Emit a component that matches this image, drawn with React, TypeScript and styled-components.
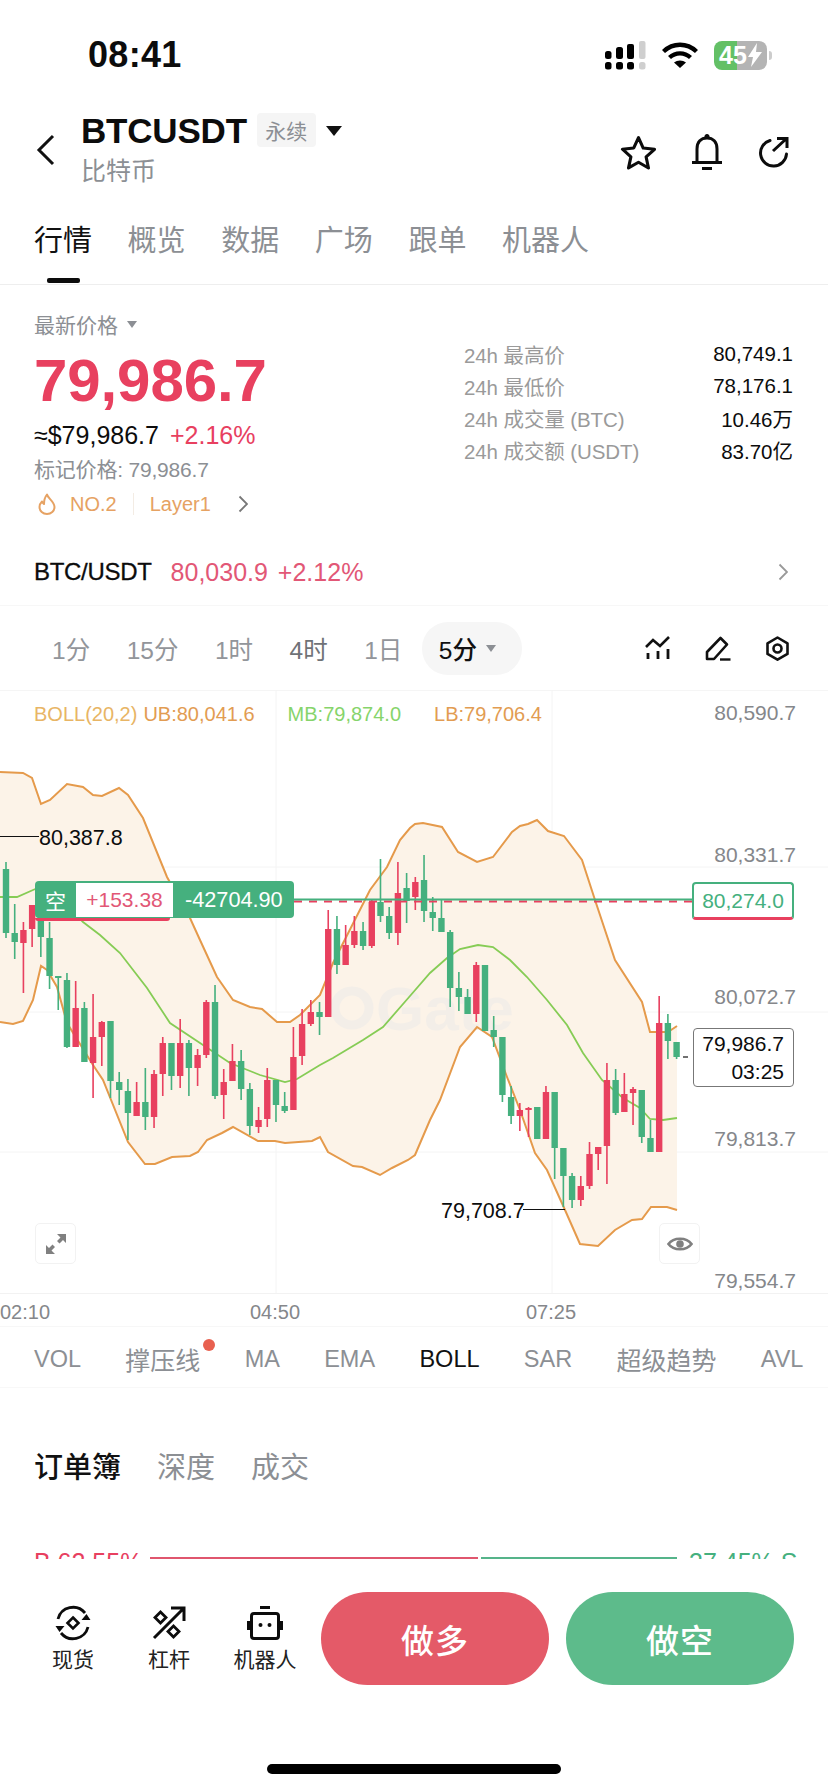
import styled, { createGlobalStyle } from 'styled-components';

const RED = '#e8405f';
const GREEN = '#45b07e';
const ORANGE = '#e6a263';

const GlobalStyle = createGlobalStyle`
  html, body {
    margin: 0;
    padding: 0;
    background: #fff;
  }
  body {
    font-family: "Liberation Sans", "Noto Sans CJK SC", sans-serif;
    color: #0c0c0c;
  }
  * {
    box-sizing: border-box;
  }
`;

// [color, high, bodyTop, bodyBottom, low], read off the reference in page pixels
type Candle = ['r' | 'g', number, number, number, number];

const CANDLES: Candle[] = [
  ['g', 862, 869, 933, 938], ['g', 904, 933, 942, 959], ['r', 922, 930, 943, 993], ['r', 905, 905, 929, 947],
  ['g', 905, 917, 937, 957], ['g', 922, 938, 976, 989], ['g', 976, 976, 978, 1010], ['g', 973, 980, 1047, 1048],
  ['r', 981, 1008, 1047, 1047], ['g', 1002, 1008, 1062, 1062], ['r', 994, 1037, 1063, 1098], ['r', 1021, 1022, 1037, 1066],
  ['g', 1021, 1021, 1081, 1098], ['g', 1072, 1082, 1090, 1105], ['g', 1079, 1091, 1113, 1140], ['r', 1082, 1102, 1116, 1116],
  ['g', 1068, 1102, 1117, 1130], ['r', 1070, 1074, 1117, 1128], ['r', 1037, 1043, 1074, 1096], ['g', 1043, 1043, 1076, 1090],
  ['r', 1019, 1043, 1076, 1088], ['g', 1040, 1043, 1068, 1096], ['r', 1049, 1055, 1068, 1086], ['r', 1000, 1002, 1055, 1058],
  ['g', 985, 1002, 1096, 1099], ['r', 1069, 1082, 1095, 1119], ['r', 1044, 1061, 1081, 1081], ['g', 1050, 1061, 1089, 1100],
  ['g', 1083, 1089, 1126, 1135], ['r', 1107, 1120, 1127, 1133], ['r', 1068, 1080, 1119, 1127], ['g', 1080, 1080, 1105, 1122],
  ['g', 1092, 1106, 1111, 1113], ['r', 1027, 1057, 1110, 1110], ['r', 1009, 1024, 1056, 1065], ['r', 1000, 1012, 1024, 1026],
  ['g', 1002, 1012, 1017, 1035], ['r', 910, 929, 1017, 1017], ['g', 916, 929, 965, 974], ['r', 925, 945, 965, 965],
  ['r', 916, 931, 945, 948], ['g', 922, 931, 946, 950], ['r', 900, 902, 946, 948], ['g', 859, 902, 916, 922],
  ['g', 907, 916, 933, 939], ['r', 862, 893, 933, 945], ['g', 873, 888, 901, 923], ['r', 877, 882, 897, 910],
  ['g', 855, 880, 911, 922], ['g', 897, 912, 918, 931], ['g', 900, 918, 932, 932], ['g', 930, 932, 988, 1007],
  ['g', 972, 988, 997, 1011], ['g', 989, 997, 1014, 1014], ['r', 962, 965, 1014, 1022], ['g', 965, 965, 1031, 1031],
  ['g', 1016, 1030, 1037, 1047], ['g', 1037, 1037, 1095, 1102], ['g', 1086, 1097, 1116, 1124], ['r', 1103, 1110, 1116, 1131],
  ['r', 1107, 1108, 1110, 1137], ['g', 1107, 1107, 1139, 1139], ['r', 1086, 1092, 1139, 1139], ['g', 1092, 1092, 1148, 1179],
  ['g', 1148, 1148, 1176, 1207], ['g', 1173, 1176, 1200, 1208], ['r', 1176, 1186, 1200, 1206], ['r', 1142, 1154, 1186, 1189],
  ['r', 1147, 1147, 1154, 1170], ['r', 1063, 1080, 1146, 1184], ['g', 1069, 1080, 1113, 1115], ['r', 1073, 1094, 1112, 1112],
  ['r', 1087, 1089, 1093, 1125], ['g', 1090, 1090, 1137, 1143], ['g', 1120, 1138, 1152, 1152], ['r', 996, 1023, 1152, 1152],
  ['g', 1014, 1023, 1041, 1059], ['g', 1042, 1042, 1057, 1059],
];

const UPPER: [number, number][] = [
  [0, 772], [23, 773], [32, 778], [41, 804], [50, 800], [67, 784], [83, 787], [93, 795], [102, 796], [119, 788],
  [128, 795], [143, 818], [167, 877], [190, 918], [200, 940], [217, 977], [233, 1000], [250, 1007], [262, 1009],
  [277, 1022], [290, 1022], [300, 1015], [320, 995], [333, 963], [370, 890], [387, 867], [400, 840], [410, 828],
  [415, 824], [423, 823], [442, 827], [458, 852], [477, 862], [493, 857], [512, 832], [520, 826], [528, 824],
  [537, 820], [548, 831], [564, 836], [582, 860], [595, 900], [615, 960], [642, 1002], [650, 1032], [660, 1032],
  [668, 1032], [677, 1026],
];

const LOWER: [number, number][] = [
  [0, 1022], [13, 1024], [23, 1021], [33, 1000], [41, 966], [47, 970], [57, 987], [67, 1023], [93, 1065], [103, 1080],
  [128, 1142], [145, 1164], [155, 1164], [172, 1157], [190, 1156], [198, 1152], [207, 1140], [222, 1133], [233, 1127],
  [258, 1141], [275, 1141], [285, 1143], [312, 1141], [320, 1137], [328, 1152], [353, 1166], [362, 1167], [380, 1175],
  [392, 1168], [408, 1160], [415, 1155], [430, 1120], [440, 1100], [460, 1047], [477, 1027], [492, 1037], [507, 1077],
  [520, 1110], [535, 1153], [547, 1170], [565, 1210], [580, 1244], [598, 1246], [615, 1230], [632, 1220], [642, 1219],
  [651, 1207], [667, 1207], [677, 1210],
];

const MIDDLE: [number, number][] = [
  [0, 897], [17, 897], [33, 890], [45, 885], [65, 903], [83, 922], [100, 935], [120, 953], [147, 988], [170, 1023],
  [200, 1043], [230, 1063], [260, 1075], [285, 1082], [297, 1079], [320, 1065], [333, 1058], [363, 1040], [383, 1027],
  [410, 996], [430, 973], [447, 958], [460, 949], [478, 945], [493, 947], [510, 960], [527, 977], [547, 1000],
  [567, 1025], [583, 1053], [602, 1080], [623, 1098], [640, 1108], [650, 1119], [663, 1120], [677, 1118],
];

const STATS = [
  { label: '24h 最高价', value: '80,749.1' },
  { label: '24h 最低价', value: '78,176.1' },
  { label: '24h 成交量 (BTC)', value: '10.46万' },
  { label: '24h 成交额 (USDT)', value: '83.70亿' },
];

const toPoints = (pts: [number, number][]) => pts.map(([x, y]) => `${x},${y}`).join(' ');
const candleX = (i: number) => 6 + 8.709 * i;

function ChartDrawing() {
  const band = toPoints([...UPPER, ...[...LOWER].reverse()]);
  return (
    <ChartSvg viewBox="0 690 828 603" width="828" height="603">
      <g stroke="#f4f4f4" strokeWidth="1">
        <line x1="0" y1="867" x2="828" y2="867" />
        <line x1="0" y1="1012" x2="828" y2="1012" />
        <line x1="0" y1="1152" x2="828" y2="1152" />
        <line x1="276" y1="690" x2="276" y2="1293" />
        <line x1="552" y1="690" x2="552" y2="1293" />
      </g>
      <polygon points={band} fill="#fcf3e8" />
      <circle cx="352" cy="1008" r="17" fill="none" stroke="#f3eee8" strokeWidth="9" />
      <text x="376" y="1030" fontSize="62" fontWeight="700" fill="#f3eee8" fontFamily="Liberation Sans">
        Gate
      </text>
      <polyline points={toPoints(UPPER)} fill="none" stroke="#e59a4b" strokeWidth="2" />
      <polyline points={toPoints(LOWER)} fill="none" stroke="#e59a4b" strokeWidth="2" />
      <polyline points={toPoints(MIDDLE)} fill="none" stroke="#86cc55" strokeWidth="1.8" />
      {CANDLES.map(([c, high, top, bottom, low], i) => {
        const x = candleX(i);
        const fill = c === 'r' ? RED : GREEN;
        return (
          <g key={i} fill={fill}>
            <rect x={x - 0.8} y={high} width="1.6" height={low - high} />
            <rect x={x - 3.2} y={top} width="6.4" height={Math.max(bottom - top, 2)} />
          </g>
        );
      })}
      <line x1="0" y1="836.5" x2="39" y2="836.5" stroke="#111" strokeWidth="1.2" />
      <line x1="523" y1="1209.5" x2="565" y2="1209.5" stroke="#111" strokeWidth="1.2" />
      <line x1="683" y1="1057" x2="688" y2="1057" stroke="#111" strokeWidth="1.2" />
      <line x1="294" y1="901.5" x2="692" y2="901.5" stroke={RED} strokeWidth="2" strokeDasharray="8 7" />
      <line x1="294" y1="899.5" x2="692" y2="899.5" stroke={GREEN} strokeWidth="2" />
    </ChartSvg>
  );
}

function SignalIcon() {
  return (
    <svg width="41" height="29" viewBox="0 0 41 29">
      <rect x="0" y="10" width="6.5" height="8" rx="2.5" />
      <rect x="11" y="6" width="7" height="12" rx="2.5" />
      <rect x="22" y="3" width="7" height="15" rx="2" />
      <rect x="34" y="0" width="6.5" height="18" rx="2" fill="#cfcfcf" />
      <rect x="0" y="21" width="6.5" height="7.5" rx="2.5" />
      <rect x="11" y="21" width="7" height="7.5" rx="2.5" />
      <rect x="22" y="21" width="7" height="7.5" rx="2.5" />
      <rect x="34" y="21" width="6.5" height="7.5" rx="2.5" fill="#cfcfcf" />
    </svg>
  );
}

function WifiIcon() {
  return (
    <svg width="36" height="26" viewBox="0 0 36 26">
      <path d="M1.5 9.5C11 .5 25 .5 34.5 9.5" fill="none" stroke="#000" strokeWidth="4.4" />
      <path d="M7.5 15.5C13.5 10 22.5 10 28.5 15.5" fill="none" stroke="#000" strokeWidth="4.4" />
      <path d="M12 20.6c3.4-2.8 8.6-2.8 12 0L18 26z" />
    </svg>
  );
}

function BackIcon() {
  return (
    <svg width="20" height="32" viewBox="0 0 20 32">
      <path d="M17 2 3 16l14 14" fill="none" stroke="#111" strokeWidth="3" />
    </svg>
  );
}

function StarIcon() {
  return (
    <svg width="37" height="35" viewBox="0 0 36 34">
      <path
        d="M18 2.5l4.6 10.2 11 1.2-8.2 7.4 2.3 10.8L18 26.5 8.3 32l2.3-10.8-8.2-7.4 11-1.2z"
        fill="none"
        stroke="#0c0c0c"
        strokeWidth="3"
        strokeLinejoin="round"
      />
    </svg>
  );
}

function BellIcon() {
  return (
    <svg width="30" height="36" viewBox="0 0 30 36">
      <path d="M15 0a2.5 2.5 0 0 1 2.5 3h-5A2.5 2.5 0 0 1 15 0z" fill="#0c0c0c" />
      <path d="M5 28V15C5 8 9 4 15 4s10 4 10 11v13" fill="none" stroke="#0c0c0c" strokeWidth="3" />
      <path d="M0 28.5h30M10 34.5h10" fill="none" stroke="#0c0c0c" strokeWidth="3" />
    </svg>
  );
}

function ShareIcon() {
  return (
    <svg width="32" height="31" viewBox="0 0 32 31">
      <path d="M13 3.5A13 13 0 1 0 29.5 17" fill="none" stroke="#0c0c0c" strokeWidth="3" strokeLinecap="round" />
      <path d="M16 14 29 2M20 1.5h10V11" fill="none" stroke="#0c0c0c" strokeWidth="3" />
    </svg>
  );
}

function FlameIcon() {
  return (
    <svg width="18" height="22" viewBox="0 0 18 22">
      <path
        d="M9 1.5c.5 3.5 7.5 7 7.5 12.5A7.5 7 0 0 1 1.5 14c0-2.5 1-4 2.5-5.5.5 1.5 1 2 2 2.5C6 7.5 7 4 9 1.5z"
        fill="none"
        stroke={ORANGE}
        strokeWidth="2"
        strokeLinejoin="round"
      />
    </svg>
  );
}

function Chevron({ color = '#777' }: { color?: string }) {
  return (
    <svg width="10" height="18" viewBox="0 0 10 18">
      <path d="M1.5 1.5 9 9l-7.5 7.5" fill="none" stroke={color} strokeWidth="1.8" />
    </svg>
  );
}

function IndicatorIcon() {
  return (
    <svg width="26" height="24" viewBox="0 0 26 24">
      <path d="M1 11l7-7 7 6 9-9" fill="none" stroke="#111" strokeWidth="2.6" />
      <path d="M3 17v6M13 15v8M23 13v10" fill="none" stroke="#111" strokeWidth="2.8" />
    </svg>
  );
}

function PenIcon() {
  return (
    <svg width="26" height="25" viewBox="0 0 26 25">
      <path d="M2 23v-7L15.5 2 22 8.5 9 23z" fill="none" stroke="#111" strokeWidth="2.6" strokeLinejoin="round" />
      <path d="M15 23.5h10.5" stroke="#111" strokeWidth="2.4" />
    </svg>
  );
}

function SettingsIcon() {
  return (
    <svg width="25" height="25" viewBox="0 0 25 25">
      <path
        d="M12.5 1.5l10 5.8v10.6l-10 5.8-10-5.800V7.300z"
        fill="none"
        stroke="#111"
        strokeWidth="2.6"
        strokeLinejoin="round"
      />
      <circle cx="12.5" cy="12.5" r="4" fill="none" stroke="#111" strokeWidth="2.6" />
    </svg>
  );
}

function ExpandIcon() {
  return (
    <svg width="20" height="20" viewBox="0 0 20 20" fill="#808080">
      <path d="M11 0h9v9l-3-3-3.5 3.5-2.5-2.5L14.500 3.500zM0 20v-9l3 3 3.500-3.500L9 13l-3.500 3.500L9 20z" />
    </svg>
  );
}

function EyeIcon() {
  return (
    <svg width="26" height="18" viewBox="0 0 26 18">
      <path d="M1.5 9C6.5 2 19.5 2 24.5 9 19.5 16 6.5 16 1.5 9z" fill="none" stroke="#808080" strokeWidth="2.6" />
      <circle cx="13" cy="9" r="3.8" fill="#808080" />
    </svg>
  );
}

function SpotIcon() {
  return (
    <svg width="36" height="36" viewBox="0 0 36 36">
      <path d="M3 14A15.5 15.5 0 0 1 30 8" fill="none" stroke="#0c0c0c" strokeWidth="2.8" />
      <path d="M33 22A15.5 15.5 0 0 1 6 28" fill="none" stroke="#0c0c0c" strokeWidth="2.8" />
      <path d="M35.5 15h-9l5-6zM.5 21h9l-5 6z" fill="#0c0c0c" />
      <path d="M18 12.5l5.5 5.5-5.5 5.5-5.5-5.5z" fill="none" stroke="#0c0c0c" strokeWidth="2.6" />
    </svg>
  );
}

function LeverageIcon() {
  return (
    <svg width="34" height="34" viewBox="0 0 34 34">
      <path d="M2 32 31 3M19 2h13v13" fill="none" stroke="#0c0c0c" strokeWidth="3" />
      <path d="M8.5 6l5.5 5.5-5.5 5.5L3 11.5z" fill="none" stroke="#0c0c0c" strokeWidth="2.8" />
      <path d="M21.5 20l5.5 5.5-5.5 5.5-5.500-5.500z" fill="none" stroke="#0c0c0c" strokeWidth="2.8" />
    </svg>
  );
}

function RobotIcon() {
  return (
    <svg width="36" height="34" viewBox="0 0 36 34">
      <path d="M13 1.5h10" stroke="#0c0c0c" strokeWidth="3" />
      <rect x="4.5" y="7.5" width="27" height="25" rx="2.5" fill="none" stroke="#0c0c0c" strokeWidth="3" />
      <path d="M1.5 15v9M34.5 15v9" stroke="#0c0c0c" strokeWidth="3" />
      <circle cx="13.5" cy="19" r="2" fill="#0c0c0c" />
      <circle cx="22.5" cy="19" r="2" fill="#0c0c0c" />
    </svg>
  );
}

export default function App() {
  return (
    <Page>
      <GlobalStyle />
      <StatusBar>
        <Clock>08:41</Clock>
        <StatusIcons>
          <SignalIcon />
          <WifiIcon />
          <Battery>
            45
            <svg width="14" height="24" viewBox="0 0 14 24">
              <path d="M9 0 0 14h5l-2 10 11-15H8z" fill="#fff" />
            </svg>
          </Battery>
        </StatusIcons>
      </StatusBar>

      <Header>
        <BackButton>
          <BackIcon />
        </BackButton>
        <TitleBlock>
          <TitleRow>
            <Symbol>BTCUSDT</Symbol>
            <ContractTag>永续</ContractTag>
            <Caret $size={8} $color="#111" />
          </TitleRow>
          <Subtitle>比特币</Subtitle>
        </TitleBlock>
        <HeaderActions>
          <StarIcon />
          <BellIcon />
          <ShareIcon />
        </HeaderActions>
      </Header>

      <MainTabs>
        <MainTab $active>行情</MainTab>
        <MainTab>概览</MainTab>
        <MainTab>数据</MainTab>
        <MainTab>广场</MainTab>
        <MainTab>跟单</MainTab>
        <MainTab>机器人</MainTab>
      </MainTabs>

      <Summary>
        <PriceColumn>
          <PriceCaption>
            最新价格
            <Caret $size={5.5} $color="#8c8f94" />
          </PriceCaption>
          <BigPrice>79,986.7</BigPrice>
          <FiatRow>
            <span>≈$79,986.7</span>
            <RedText>+2.16%</RedText>
          </FiatRow>
          <MarkPrice>标记价格: 79,986.7</MarkPrice>
          <RankRow>
            <FlameIcon />
            <span>NO.2</span>
            <RankDivider />
            <span>Layer1</span>
            <RankChevron>
              <Chevron />
            </RankChevron>
          </RankRow>
        </PriceColumn>
        <StatsColumn>
          {STATS.map((s) => (
            <StatRow key={s.label}>
              <StatLabel>{s.label}</StatLabel>
              <span>{s.value}</span>
            </StatRow>
          ))}
        </StatsColumn>
      </Summary>

      <PairRow>
        <PairName>BTC/USDT</PairName>
        <PairPrice>80,030.9 +2.12%</PairPrice>
        <PairChevron>
          <Chevron color="#999" />
        </PairChevron>
      </PairRow>

      <PeriodRow>
        <Period>1分</Period>
        <Period>15分</Period>
        <Period>1时</Period>
        <Period $strong>4时</Period>
        <Period>1日</Period>
        <PeriodPill>
          5分
          <Caret $size={5.5} $color="#8c8f94" />
        </PeriodPill>
        <ToolIcons>
          <IndicatorIcon />
          <PenIcon />
          <SettingsIcon />
        </ToolIcons>
      </PeriodRow>

      <Chart>
        <ChartDrawing />
        <Legend>
          <LegendItem $color="#e8b565">BOLL(20,2)</LegendItem>
          <LegendItem $color="#e29c52">UB:80,041.6</LegendItem>
          <LegendItem $color="#86d46b" $wide>MB:79,874.0</LegendItem>
          <LegendItem $color="#e29c52" $wide>LB:79,706.4</LegendItem>
        </Legend>
        <PriceAxis>
          <span>80,590.7</span>
          <span>80,331.7</span>
          <span>80,072.7</span>
          <span>79,813.7</span>
          <span>79,554.7</span>
        </PriceAxis>
        <HighLabel>80,387.8</HighLabel>
        <LowLabel>79,708.7</LowLabel>
        <PositionTag>
          <PositionSide>空</PositionSide>
          <PositionPnl>+153.38</PositionPnl>
          <PositionAmount>-42704.90</PositionAmount>
        </PositionTag>
        <EntryPrice>80,274.0</EntryPrice>
        <LastPrice>
          <span>79,986.7</span>
          <span>03:25</span>
        </LastPrice>
        <ExpandButton>
          <ExpandIcon />
        </ExpandButton>
        <EyeButton>
          <EyeIcon />
        </EyeButton>
      </Chart>

      <TimeAxis>
        <span>02:10</span>
        <span>04:50</span>
        <span>07:25</span>
      </TimeAxis>

      <IndicatorRow>
        <Indicator $latin>VOL</Indicator>
        <Indicator $dot>撑压线</Indicator>
        <Indicator $latin>MA</Indicator>
        <Indicator $latin>EMA</Indicator>
        <Indicator $latin $active>BOLL</Indicator>
        <Indicator $latin>SAR</Indicator>
        <Indicator>超级趋势</Indicator>
        <Indicator $latin>AVL</Indicator>
      </IndicatorRow>

      <BookTabs>
        <BookTab $active>订单簿</BookTab>
        <BookTab>深度</BookTab>
        <BookTab>成交</BookTab>
      </BookTabs>

      <RatioRow>
        <RatioBuy>B 62.55%</RatioBuy>
        <RatioBars>
          <RatioBar $color="#e0566e" $grow={328} />
          <RatioBar $color="#55b48a" $grow={196} />
        </RatioBars>
        <RatioSell>37.45% S</RatioSell>
      </RatioRow>

      <BottomBar>
        <NavGroup>
          <NavItem>
            <SpotIcon />
            <span>现货</span>
          </NavItem>
          <NavItem>
            <LeverageIcon />
            <span>杠杆</span>
          </NavItem>
          <NavItem>
            <RobotIcon />
            <span>机器人</span>
          </NavItem>
        </NavGroup>
        <TradeButton $color="#e45a68">做多</TradeButton>
        <TradeButton $color="#5dbb8b">做空</TradeButton>
      </BottomBar>

      <HomeBar />
    </Page>
  );
}

const Page = styled.div`
  position: relative;
  width: 828px;
  height: 1792px;
  overflow: hidden;
  background: #fff;
`;

const StatusBar = styled.div`
  display: flex;
  align-items: center;
  justify-content: space-between;
  height: 110px;
  padding: 0 61px 0 88px;
`;

const Clock = styled.div`
  font-size: 36px;
  font-weight: 700;
  letter-spacing: 0.3px;
`;

const StatusIcons = styled.div`
  display: flex;
  align-items: center;
  gap: 16px;
`;

const Battery = styled.div`
  position: relative;
  display: flex;
  align-items: center;
  justify-content: center;
  gap: 1px;
  width: 53px;
  height: 29px;
  border-radius: 8px;
  background: linear-gradient(90deg, #63c066 43%, #b4b4b4 43%);
  color: #fff;
  font-size: 25px;
  font-weight: 700;

  &::after {
    content: '';
    position: absolute;
    right: -5px;
    top: 10px;
    width: 3px;
    height: 9px;
    border-radius: 0 3px 3px 0;
    background: #ccc;
  }
`;

const Header = styled.div`
  display: flex;
  align-items: center;
  height: 80px;
  padding: 0 39px 0 36px;
`;

const BackButton = styled.div`
  display: flex;
  width: 45px;
`;

const TitleBlock = styled.div`
  display: flex;
  flex-direction: column;
  gap: 5px;
  flex: 1;
  margin-bottom: 3px;
`;

const TitleRow = styled.div`
  display: flex;
  align-items: center;
  height: 40px;
`;

const Symbol = styled.div`
  font-size: 35px;
  font-weight: 700;
  letter-spacing: -0.2px;
`;

const ContractTag = styled.div`
  display: flex;
  align-items: center;
  justify-content: center;
  width: 59px;
  height: 34px;
  margin: -3px 10px 0 10px;
  border-radius: 4px;
  background: #f5f5f5;
  color: #8c8f94;
  font-size: 21px;
`;

const Caret = styled.i<{ $size: number; $color: string }>`
  display: inline-block;
  width: 0;
  height: 0;
  border-left: ${(p) => p.$size}px solid transparent;
  border-right: ${(p) => p.$size}px solid transparent;
  border-top: ${(p) => p.$size * 1.3}px solid ${(p) => p.$color};
`;

const Subtitle = styled.div`
  color: #8c8f94;
  font-size: 25px;
  line-height: 30px;
`;

const HeaderActions = styled.div`
  display: flex;
  align-items: center;
  gap: 35px;
  margin-top: 4px;
`;

const MainTabs = styled.div`
  display: flex;
  gap: 35.6px;
  height: 95px;
  padding: 31px 0 0 34px;
  border-bottom: 1px solid #eeeeee;
`;

const MainTab = styled.div<{ $active?: boolean }>`
  position: relative;
  height: 40px;
  color: ${(p) => (p.$active ? '#111' : '#8c8f94')};
  font-size: 29px;
  line-height: 40px;

  ${(p) =>
    p.$active &&
    `
    &::after {
      content: '';
      position: absolute;
      left: 13px;
      top: 57px;
      width: 33px;
      height: 5px;
      border-radius: 2px;
      background: #0c0c0c;
    }
  `}
`;

const Summary = styled.div`
  display: flex;
  justify-content: space-between;
  height: 240px;
  padding: 23px 35px 0 34px;
`;

const PriceColumn = styled.div`
  display: flex;
  flex-direction: column;
`;

const PriceCaption = styled.div`
  display: flex;
  align-items: center;
  gap: 9px;
  height: 32px;
  color: #8c8f94;
  font-size: 21px;
`;

const BigPrice = styled.div`
  color: ${RED};
  font-size: 60px;
  font-weight: 700;
  line-height: 82px;
  letter-spacing: -0.1px;
`;

const FiatRow = styled.div`
  display: flex;
  gap: 11px;
  height: 35px;
  font-size: 25px;
  line-height: 26px;
`;

const RedText = styled.span`
  color: ${RED};
`;

const MarkPrice = styled.div`
  height: 26px;
  color: #8c8f94;
  font-size: 21px;
  line-height: 26px;
  letter-spacing: -0.2px;
`;

const RankRow = styled.div`
  display: flex;
  align-items: center;
  gap: 14px;
  height: 42px;
  padding-left: 4px;
  color: ${ORANGE};
  font-size: 20px;
`;

const RankDivider = styled.div`
  width: 1px;
  height: 22px;
  margin: 0 2px;
  background: #f3ece4;
`;

const RankChevron = styled.div`
  display: flex;
  margin-left: 13px;
`;

const StatsColumn = styled.div`
  display: flex;
  flex-direction: column;
  width: 329px;
  padding-top: 30px;
`;

const StatRow = styled.div`
  display: flex;
  align-items: center;
  justify-content: space-between;
  height: 32px;
  font-size: 20.5px;
`;

const StatLabel = styled.span`
  color: #9a9a9a;
  letter-spacing: -0.1px;
`;

const PairRow = styled.div`
  display: flex;
  align-items: center;
  height: 81px;
  padding: 14px 40px 0 34px;
  border-bottom: 1px solid #f7f7f7;
`;

const PairName = styled.div`
  font-size: 24px;
  letter-spacing: -0.3px;
  -webkit-text-stroke: 0.3px #0c0c0c;
`;

const PairPrice = styled.div`
  margin-left: 19px;
  color: #e25776;
  font-size: 25px;
  word-spacing: 3px;
`;

const PairChevron = styled.div`
  display: flex;
  margin-left: auto;
`;

const PeriodRow = styled.div`
  display: flex;
  align-items: center;
  height: 84px;
  padding: 0 38px 0 52px;
`;

const Period = styled.div<{ $strong?: boolean }>`
  margin-right: 36.5px;
  color: ${(p) => (p.$strong ? '#6f7277' : '#92959a')};
  font-size: 24.5px;
`;

const PeriodPill = styled.div`
  display: flex;
  align-items: center;
  gap: 9px;
  width: 100px;
  height: 53px;
  margin-left: -17px;
  padding-left: 17px;
  border-radius: 26px;
  background: #f6f6f6;
  color: #111;
  font-size: 24.5px;
  font-weight: 500;
`;

const ToolIcons = styled.div`
  display: flex;
  align-items: center;
  gap: 34px;
  margin-left: auto;
`;

const Chart = styled.div`
  position: relative;
  height: 603px;
  border-top: 1px solid #f5f5f5;
`;

const ChartSvg = styled.svg`
  display: block;
  margin-top: -1px;
`;

const Legend = styled.div`
  position: absolute;
  left: 34px;
  top: 10px;
  display: flex;
  font-size: 20px;
  line-height: 26px;
`;

const LegendItem = styled.span<{ $color: string; $wide?: boolean }>`
  margin-left: ${(p) => (p.$wide ? '27px' : '0')};
  margin-right: 6px;
  color: ${(p) => p.$color};
`;

const PriceAxis = styled.div`
  position: absolute;
  right: 32px;
  top: 9px;
  display: flex;
  flex-direction: column;
  align-items: flex-end;
  gap: 116px;
  color: #85878b;
  font-size: 21px;
  line-height: 26px;
`;

const HighLabel = styled.div`
  position: absolute;
  left: 39px;
  top: 134px;
  font-size: 21.5px;
  line-height: 26px;
`;

const LowLabel = styled.div`
  position: absolute;
  left: 441px;
  top: 507px;
  font-size: 21.5px;
  line-height: 26px;
`;

const PositionTag = styled.div`
  position: absolute;
  left: 35px;
  top: 190px;
  display: flex;
  align-items: center;
  width: 259px;
  height: 37px;
  border-radius: 4px;
  background: ${GREEN};
  color: #fff;
  font-size: 21px;

  &::after {
    content: '';
    position: absolute;
    left: 0;
    bottom: -3px;
    width: 135px;
    height: 3px;
    border-radius: 0 0 3px 3px;
    background: ${RED};
  }
`;

const PositionSide = styled.div`
  width: 41px;
  padding-left: 10px;
`;

const PositionPnl = styled.div`
  display: flex;
  align-items: center;
  justify-content: center;
  width: 97px;
  height: 34px;
  background: #fff;
  color: #e25776;
`;

const PositionAmount = styled.div`
  margin-left: 12px;
  font-size: 21.7px;
`;

const EntryPrice = styled.div`
  position: absolute;
  left: 692px;
  top: 191px;
  display: flex;
  align-items: center;
  justify-content: center;
  width: 102px;
  height: 38px;
  border: 2px solid ${GREEN};
  border-bottom: 3px solid ${RED};
  border-radius: 4px;
  background: #fff;
  color: ${GREEN};
  font-size: 21px;
`;

const LastPrice = styled.div`
  position: absolute;
  left: 693px;
  top: 337px;
  display: flex;
  flex-direction: column;
  align-items: flex-end;
  justify-content: center;
  width: 101px;
  height: 59px;
  padding-right: 9px;
  border: 1px solid #777;
  border-radius: 4px;
  background: #fff;
  font-size: 21px;
  line-height: 28px;
`;

const ChartButton = styled.div`
  position: absolute;
  top: 532px;
  display: flex;
  align-items: center;
  justify-content: center;
  width: 41px;
  height: 41px;
  border: 1.5px solid #f2f2f2;
  border-radius: 5px;
  background: #fff;
`;

const ExpandButton = styled(ChartButton)`
  left: 35px;
`;

const EyeButton = styled(ChartButton)`
  left: 659px;
`;

const TimeAxis = styled.div`
  display: grid;
  grid-template-columns: 250px 276px 1fr;
  height: 34px;
  padding-top: 7px;
  border-top: 1px solid #f2f2f2;
  border-bottom: 1px solid #f7f7f7;
  color: #85878b;
  font-size: 20px;
  line-height: 22px;
`;

const IndicatorRow = styled.div`
  display: flex;
  align-items: center;
  gap: 44.3px;
  height: 61px;
  padding: 4px 0 0 34px;
  border-bottom: 1px solid #f8f8f8;
  white-space: nowrap;
`;

const Indicator = styled.div<{ $active?: boolean; $dot?: boolean; $latin?: boolean }>`
  position: relative;
  color: ${(p) => (p.$active ? '#111' : '#8c8f94')};
  font-size: ${(p) => (p.$latin ? '23.5px' : '25px')};

  ${(p) =>
    p.$dot &&
    `
    &::after {
      content: '';
      position: absolute;
      right: -15px;
      top: -2px;
      width: 12px;
      height: 12px;
      border-radius: 50%;
      background: #e8604f;
    }
  `}
`;

const BookTabs = styled.div`
  display: flex;
  gap: 36px;
  padding: 60px 0 0 34px;
  height: 99px;
`;

const BookTab = styled.div<{ $active?: boolean }>`
  color: ${(p) => (p.$active ? '#111' : '#8c8f94')};
  font-size: 29px;
  font-weight: ${(p) => (p.$active ? 500 : 400)};
  line-height: 40px;
`;

const RatioRow = styled.div`
  display: flex;
  height: 72px;
  overflow: hidden;
  padding: 60px 35px 0 34px;
  font-size: 25px;
  line-height: 30px;
`;

const RatioBuy = styled.div`
  width: 116px;
  color: ${RED};
`;

const RatioSell = styled.div`
  width: 104px;
  margin-left: 12px;
  color: ${GREEN};
  white-space: nowrap;
`;

const RatioBars = styled.div`
  display: flex;
  gap: 3px;
  width: 527px;
  height: 3px;
  margin-top: 10px;
`;

const RatioBar = styled.div<{ $color: string; $grow: number }>`
  flex: ${(p) => p.$grow};
  background: ${(p) => p.$color};
`;

const BottomBar = styled.div`
  display: flex;
  padding: 33px 34px 0 25px;
`;

const NavGroup = styled.div`
  display: flex;
  width: 296px;
`;

const NavItem = styled.div`
  display: flex;
  flex-direction: column;
  align-items: center;
  gap: 6px;
  width: 96px;
  padding-top: 13px;
  font-size: 21px;
  line-height: 26px;
  color: #222;

  svg {
    display: block;
    height: 36px;
  }
`;

const TradeButton = styled.div<{ $color: string }>`
  display: flex;
  align-items: center;
  justify-content: center;
  width: 228px;
  height: 93px;
  border-radius: 46.5px;
  background: ${(p) => p.$color};
  color: #fff;
  font-size: 33px;
  font-weight: 500;
  letter-spacing: 1px;

  & + & {
    margin-left: 17px;
  }
`;

const HomeBar = styled.div`
  width: 294px;
  height: 10px;
  margin: 79px 0 0 267px;
  border-radius: 5px;
  background: #000;
`;
